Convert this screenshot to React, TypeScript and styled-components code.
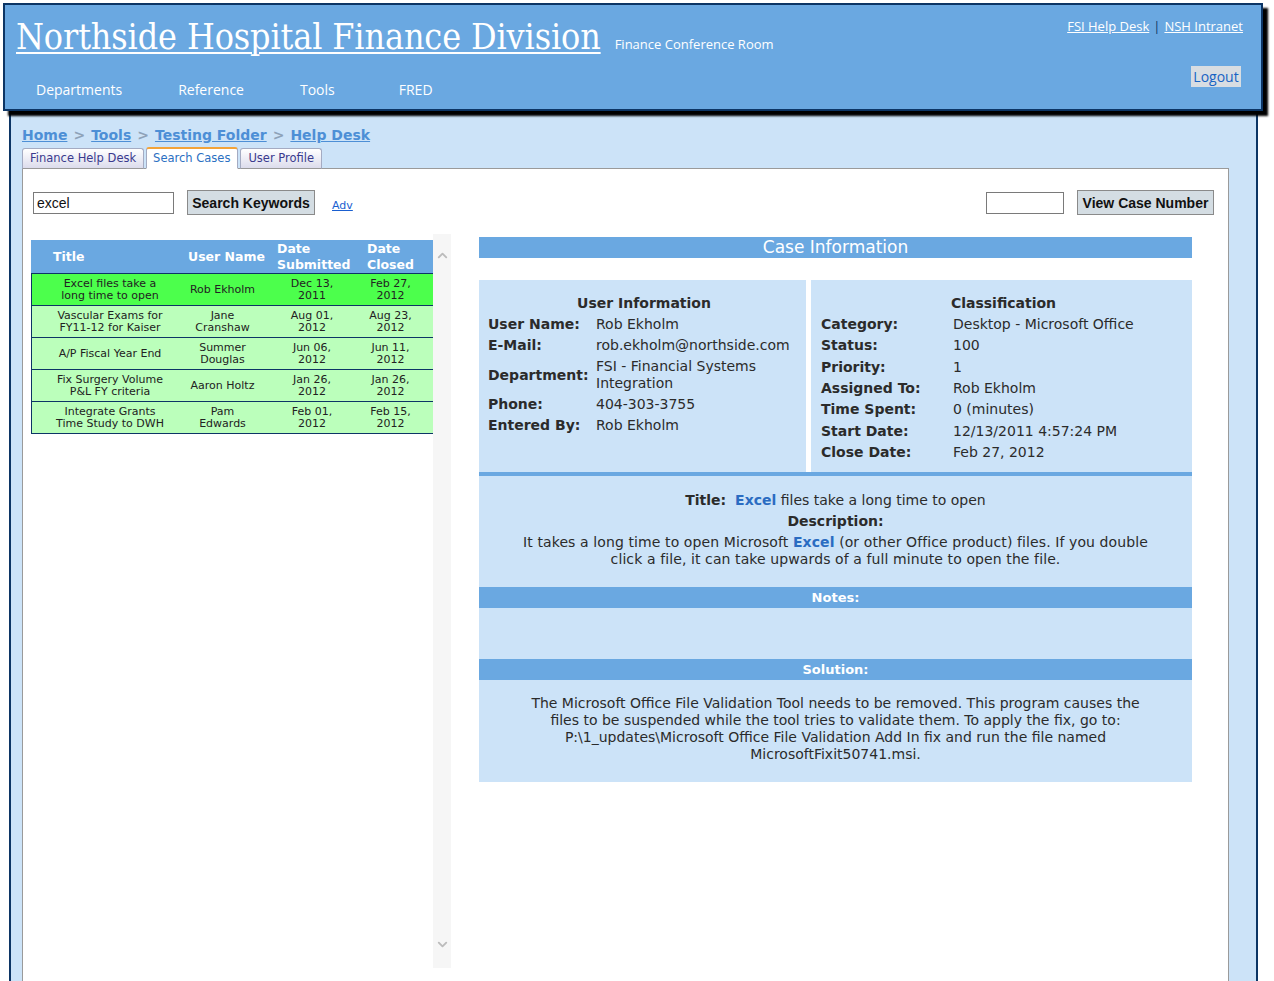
import React from "react";
import styled, { createGlobalStyle } from "styled-components";
import { ChevronUp, ChevronDown } from "lucide-react";

const NAVY = "#0c3565";
const BLUE = "#6aa8e1";
const LIGHT = "#cce3f8";
const TEXT = "#2b2b2b";

const GlobalStyle = createGlobalStyle`
  html, body { margin: 0; padding: 0; background: #fff; overflow: hidden; }
  body { font-family: "DejaVu Sans", Verdana, sans-serif; }
  * { box-sizing: border-box; }
`;

const Page = styled.div`
  width: 1274px;
  height: 981px;
  padding-top: 3px;
`;

/* ---------- Header ---------- */
const Header = styled.header`
  position: relative;
  z-index: 2;
  margin-left: 3px;
  width: 1260px;
  height: 108px;
  background: ${BLUE};
  border: 2px solid ${NAVY};
  box-shadow: 5px 5px 2px #000;
  display: grid;
  grid-template-columns: 1fr auto;
  padding: 0 18px 0 11px;
`;

const HeaderLeft = styled.div`
  display: flex;
  flex-direction: column;
`;

const TitleRow = styled.div`
  display: flex;
  align-items: baseline;
  gap: 14px;
  margin-top: 11px;
  height: 44px;
`;

const SiteTitle = styled.a`
  font-family: "DejaVu Serif", "Liberation Serif", serif;
  font-stretch: condensed;
  font-size: 35.5px;
  line-height: 42px;
  color: #fff;
  text-decoration: underline;
  text-decoration-thickness: 2px;
  text-underline-offset: 3px;
  letter-spacing: -0.1px;
`;

const SubTitle = styled.span`
  font-family: "Open Sans", sans-serif;
  font-size: 13px;
  color: #fff;
`;

const Nav = styled.nav`
  display: flex;
  margin-top: 20px;
  padding-left: 20px;
`;

const NavItem = styled.a<{ $mr: number }>`
  font-family: "Open Sans", sans-serif;
  font-size: 14px;
  line-height: 20px;
  color: #fff;
  margin-right: ${(p) => p.$mr}px;
`;

const HeaderRight = styled.div`
  display: flex;
  flex-direction: column;
  align-items: flex-end;
  padding-top: 11px;
`;

const TopLinks = styled.div`
  font-family: "Open Sans", sans-serif;
  font-size: 13px;
  line-height: 20px;
  color: #fff;
  display: flex;
  gap: 4px;
`;

const TopLink = styled.a`
  color: #fff;
  text-decoration: underline;
`;

const Sep = styled.span`
  color: ${NAVY};
`;

const LogoutButton = styled.button`
  margin-top: 30px;
  margin-right: 2px;
  width: 50px;
  height: 21px;
  padding: 0;
  border: none;
  background: #d8dde2;
  color: #1763c4;
  font-family: "Open Sans", sans-serif;
  font-size: 14px;
  line-height: 21px;
`;

/* ---------- Main ---------- */
const Main = styled.main`
  margin-left: 9px;
  width: 1249px;
  height: 870px;
  background: ${LIGHT};
  border-left: 2px solid ${NAVY};
  border-right: 2px solid ${NAVY};
  padding: 15px 27px 0 11px;
  display: flex;
  flex-direction: column;
`;

const Breadcrumb = styled.div`
  font-size: 14px;
  font-weight: bold;
  line-height: 18px;
  display: flex;
  gap: 6px;
  color: #8ea2b8;
`;

const Crumb = styled.a`
  color: #4d8fd6;
  text-decoration: underline;
`;

const Tabs = styled.div`
  display: flex;
  gap: 2px;
  margin-top: 3px;
  margin-bottom: -1px;
  position: relative;
  z-index: 1;
  align-items: flex-end;
`;

const Tab = styled.a<{ $active?: boolean }>`
  height: ${(p) => (p.$active ? "22px" : "21px")};
  padding: 0 7px 0 ${(p) => (p.$active ? "6px" : "7px")};
  font-size: 11.5px;
  line-height: 19px;
  border: 1px solid #a4abc2;
  border-bottom: ${(p) => (p.$active ? "1px solid #fff" : "1px solid #999")};
  border-top: ${(p) => (p.$active ? "2px solid #f2a33a" : "1px solid #a4abc2")};
  border-radius: 3px 3px 0 0;
  color: ${(p) => (p.$active ? "#2b6fc2" : "#3a3a8e")};
  background: ${(p) =>
    p.$active ? "#fff" : "linear-gradient(#ffffff, #dcdcec)"};
`;

const Panel = styled.section`
  flex: 1;
  width: 1207px;
  background: #fff;
  border: 1px solid #9a9a9a;
  border-bottom: none;
  padding: 21px 14px 0 8px;
`;

const SearchRow = styled.div`
  display: flex;
  justify-content: space-between;
  align-items: center;
  height: 25px;
`;

const SearchGroup = styled.div`
  display: flex;
  align-items: center;
  margin-left: 2px;
`;

const TextInput = styled.input<{ $w: number }>`
  width: ${(p) => p.$w}px;
  height: 22px;
  border: 1px solid #7a7a7a;
  padding: 0 3px;
  font-family: "Liberation Sans", Arial, sans-serif;
  font-size: 14px;
  color: #111;
  outline: none;
`;

const GrayButton = styled.button<{ $w: number }>`
  width: ${(p) => p.$w}px;
  height: 25px;
  margin-left: 13px;
  background: #d4dde3;
  border: 1px solid #8a8a8a;
  font-family: "Liberation Sans", Arial, sans-serif;
  font-weight: bold;
  font-size: 14px;
  color: #111;
  padding: 0;
`;

const AdvLink = styled.a`
  margin-left: 17px;
  margin-top: 6px;
  font-size: 11px;
  color: #1a5fd0;
  text-decoration: underline;
`;

const Body = styled.div`
  display: flex;
  gap: 28px;
  margin-top: 19px;
`;

/* ---------- Case list ---------- */
const ListBox = styled.div`
  display: flex;
  width: 420px;
  height: 734px;
`;

const ListContent = styled.div`
  width: 402px;
  padding-top: 6px;
`;

const ScrollBar = styled.div`
  width: 18px;
  background: #f6f6f6;
  display: flex;
  flex-direction: column;
  justify-content: space-between;
  align-items: center;
  padding: 14px 0 16px;
  color: #bcbcbc;
`;

const COLS = "156px 69px 110px 67px";

const HeadRow = styled.div`
  display: grid;
  grid-template-columns: ${COLS};
  height: 34px;
  background: ${BLUE};
  border-bottom: 1px solid ${NAVY};
  color: #fff;
  font-weight: bold;
  font-size: 12.5px;
  line-height: 16px;
`;

const HeadCell = styled.div<{ $pl: number }>`
  display: flex;
  align-items: center;
  padding-left: ${(p) => p.$pl}px;
  white-space: nowrap;
`;

const Row = styled.div<{ $selected?: boolean }>`
  display: grid;
  grid-template-columns: ${COLS};
  height: 32px;
  background: ${(p) => (p.$selected ? "#4cff4c" : "#bbffbb")};
  border-bottom: 1px solid ${NAVY};
  border-left: 1px solid ${NAVY};
`;

const Cell = styled.div<{ $shift?: number }>`
  display: flex;
  align-items: center;
  justify-content: center;
  text-align: center;
  font-size: 11px;
  line-height: 12px;
  color: #222;
  padding-right: ${(p) => p.$shift || 0}px;
  white-space: nowrap;
`;

/* ---------- Case info ---------- */
const CaseInfo = styled.div`
  width: 713px;
  margin-top: 3px;
  display: flex;
  flex-direction: column;
`;

const CaseHeader = styled.div`
  height: 21px;
  background: ${BLUE};
  color: #fff;
  font-size: 17px;
  line-height: 21px;
  text-align: center;
`;

const InfoGrid = styled.div`
  margin-top: 22px;
  display: grid;
  grid-template-columns: 327px 381px;
  gap: 5px;
  height: 192px;
`;

const InfoBox = styled.div<{ $pl: number }>`
  background: ${LIGHT};
  padding: 12px 6px 0 ${(p) => p.$pl}px;
  color: ${TEXT};
  font-size: 14px;
`;

const InfoTitle = styled.div`
  height: 22px;
  line-height: 22px;
  font-weight: bold;
  text-align: center;
`;

const InfoRow = styled.div<{ $lw: number; $py: number }>`
  display: grid;
  grid-template-columns: ${(p) => p.$lw}px 1fr;
  align-items: center;
  padding: ${(p) => p.$py}px 0;
  line-height: 17px;
`;

const Label = styled.span`
  font-weight: bold;
`;

const BlueRule = styled.div`
  height: 4px;
  background: ${BLUE};
`;

const DescBox = styled.div`
  background: ${LIGHT};
  padding: 14px 10px 19px;
  text-align: center;
  color: ${TEXT};
  font-size: 14px;
`;

const DescLine = styled.div`
  line-height: 21px;
`;

const Para = styled.p`
  margin: 2px 0 0;
  line-height: 17px;
  letter-spacing: 0.1px;
`;

const Hit = styled.span`
  color: #2a6cc2;
  font-weight: bold;
`;

const SectionBar = styled.div`
  height: 21px;
  background: ${BLUE};
  color: #fff;
  font-weight: bold;
  font-size: 13px;
  line-height: 21px;
  text-align: center;
`;

const NotesBody = styled.div`
  height: 51px;
  background: ${LIGHT};
`;

const SolutionBody = styled.div`
  background: ${LIGHT};
  padding: 15px 10px 19px;
  text-align: center;
  color: ${TEXT};
  font-size: 14px;
  line-height: 17px;
`;

const cases = [
  { title: ["Excel files take a", "long time to open"], user: ["Rob Ekholm"], sub: ["Dec 13,", "2011"], closed: ["Feb 27,", "2012"], selected: true },
  { title: ["Vascular Exams for", "FY11-12 for Kaiser"], user: ["Jane", "Cranshaw"], sub: ["Aug 01,", "2012"], closed: ["Aug 23,", "2012"] },
  { title: ["A/P Fiscal Year End"], user: ["Summer", "Douglas"], sub: ["Jun 06,", "2012"], closed: ["Jun 11,", "2012"] },
  { title: ["Fix Surgery Volume", "P&L FY criteria"], user: ["Aaron Holtz"], sub: ["Jan 26,", "2012"], closed: ["Jan 26,", "2012"] },
  { title: ["Integrate Grants", "Time Study to DWH"], user: ["Pam", "Edwards"], sub: ["Feb 01,", "2012"], closed: ["Feb 15,", "2012"] },
];

const Lines = ({ lines }: { lines: string[] }) => (
  <span>
    {lines.map((l, i) => (
      <React.Fragment key={i}>
        {i > 0 && <br />}
        {l}
      </React.Fragment>
    ))}
  </span>
);

const userInfo: [string, string][] = [
  ["User Name:", "Rob Ekholm"],
  ["E-Mail:", "rob.ekholm@northside.com"],
  ["Department:", "FSI - Financial Systems Integration"],
  ["Phone:", "404-303-3755"],
  ["Entered By:", "Rob Ekholm"],
];

const classInfo: [string, string][] = [
  ["Category:", "Desktop - Microsoft Office"],
  ["Status:", "100"],
  ["Priority:", "1"],
  ["Assigned To:", "Rob Ekholm"],
  ["Time Spent:", "0 (minutes)"],
  ["Start Date:", "12/13/2011 4:57:24 PM"],
  ["Close Date:", "Feb 27, 2012"],
];

const navItems: [string, number][] = [
  ["Departments", 56],
  ["Reference", 56],
  ["Tools", 64],
  ["FRED", 0],
];

export default function App() {
  return (
    <Page>
      <GlobalStyle />
      <Header>
        <HeaderLeft>
          <TitleRow>
            <SiteTitle>Northside Hospital Finance Division</SiteTitle>
            <SubTitle>Finance Conference Room</SubTitle>
          </TitleRow>
          <Nav>
            {navItems.map(([n, mr]) => (
              <NavItem key={n} $mr={mr}>
                {n}
              </NavItem>
            ))}
          </Nav>
        </HeaderLeft>
        <HeaderRight>
          <TopLinks>
            <TopLink>FSI Help Desk</TopLink>
            <Sep>|</Sep>
            <TopLink>NSH Intranet</TopLink>
          </TopLinks>
          <LogoutButton>Logout</LogoutButton>
        </HeaderRight>
      </Header>

      <Main>
        <Breadcrumb>
          <Crumb>Home</Crumb>&gt;<Crumb>Tools</Crumb>&gt;
          <Crumb>Testing Folder</Crumb>&gt;<Crumb>Help Desk</Crumb>
        </Breadcrumb>
        <Tabs>
          <Tab>Finance Help Desk</Tab>
          <Tab $active>Search Cases</Tab>
          <Tab>User Profile</Tab>
        </Tabs>
        <Panel>
          <SearchRow>
            <SearchGroup>
              <TextInput $w={141} defaultValue="excel" />
              <GrayButton $w={128}>Search Keywords</GrayButton>
              <AdvLink>Adv</AdvLink>
            </SearchGroup>
            <SearchGroup>
              <TextInput $w={78} defaultValue="" />
              <GrayButton $w={137}>View Case Number</GrayButton>
            </SearchGroup>
          </SearchRow>

          <Body>
            <ListBox>
              <ListContent>
                <HeadRow>
                  <HeadCell $pl={22}>Title</HeadCell>
                  <HeadCell $pl={1}>User Name</HeadCell>
                  <HeadCell $pl={21}>
                    Date
                    <br />
                    Submitted
                  </HeadCell>
                  <HeadCell $pl={1}>
                    Date
                    <br />
                    Closed
                  </HeadCell>
                </HeadRow>
                {cases.map((c, i) => (
                  <Row key={i} $selected={c.selected}>
                    <Cell>
                      <Lines lines={c.title} />
                    </Cell>
                    <Cell>
                      <Lines lines={c.user} />
                    </Cell>
                    <Cell>
                      <Lines lines={c.sub} />
                    </Cell>
                    <Cell $shift={20}>
                      <Lines lines={c.closed} />
                    </Cell>
                  </Row>
                ))}
              </ListContent>
              <ScrollBar>
                <ChevronUp size={15} strokeWidth={3} />
                <ChevronDown size={15} strokeWidth={3} />
              </ScrollBar>
            </ListBox>

            <CaseInfo>
              <CaseHeader>Case Information</CaseHeader>
              <InfoGrid>
                <InfoBox $pl={9}>
                  <InfoTitle>User Information</InfoTitle>
                  {userInfo.map(([l, v]) => (
                    <InfoRow key={l} $lw={108} $py={2}>
                      <Label>{l}</Label>
                      <span>{v}</span>
                    </InfoRow>
                  ))}
                </InfoBox>
                <InfoBox $pl={10}>
                  <InfoTitle>Classification</InfoTitle>
                  {classInfo.map(([l, v]) => (
                    <InfoRow key={l} $lw={132} $py={2.17}>
                      <Label>{l}</Label>
                      <span>{v}</span>
                    </InfoRow>
                  ))}
                </InfoBox>
              </InfoGrid>
              <BlueRule />
              <DescBox>
                <DescLine>
                  <Label>Title:</Label>&nbsp; <Hit>Excel</Hit> files take a long time to open
                </DescLine>
                <DescLine>
                  <Label>Description:</Label>
                </DescLine>
                <Para>
                  It takes a long time to open Microsoft <Hit>Excel</Hit> (or other Office product) files. If you double
                  <br />
                  click a file, it can take upwards of a full minute to open the file.
                </Para>
              </DescBox>
              <SectionBar>Notes:</SectionBar>
              <NotesBody />
              <SectionBar>Solution:</SectionBar>
              <SolutionBody>
                The Microsoft Office File Validation Tool needs to be removed. This program causes the
                <br />
                files to be suspended while the tool tries to validate them. To apply the fix, go to:
                <br />
                P:\1_updates\Microsoft Office File Validation Add In fix and run the file named
                <br />
                MicrosoftFixit50741.msi.
              </SolutionBody>
            </CaseInfo>
          </Body>
        </Panel>
      </Main>
    </Page>
  );
}
